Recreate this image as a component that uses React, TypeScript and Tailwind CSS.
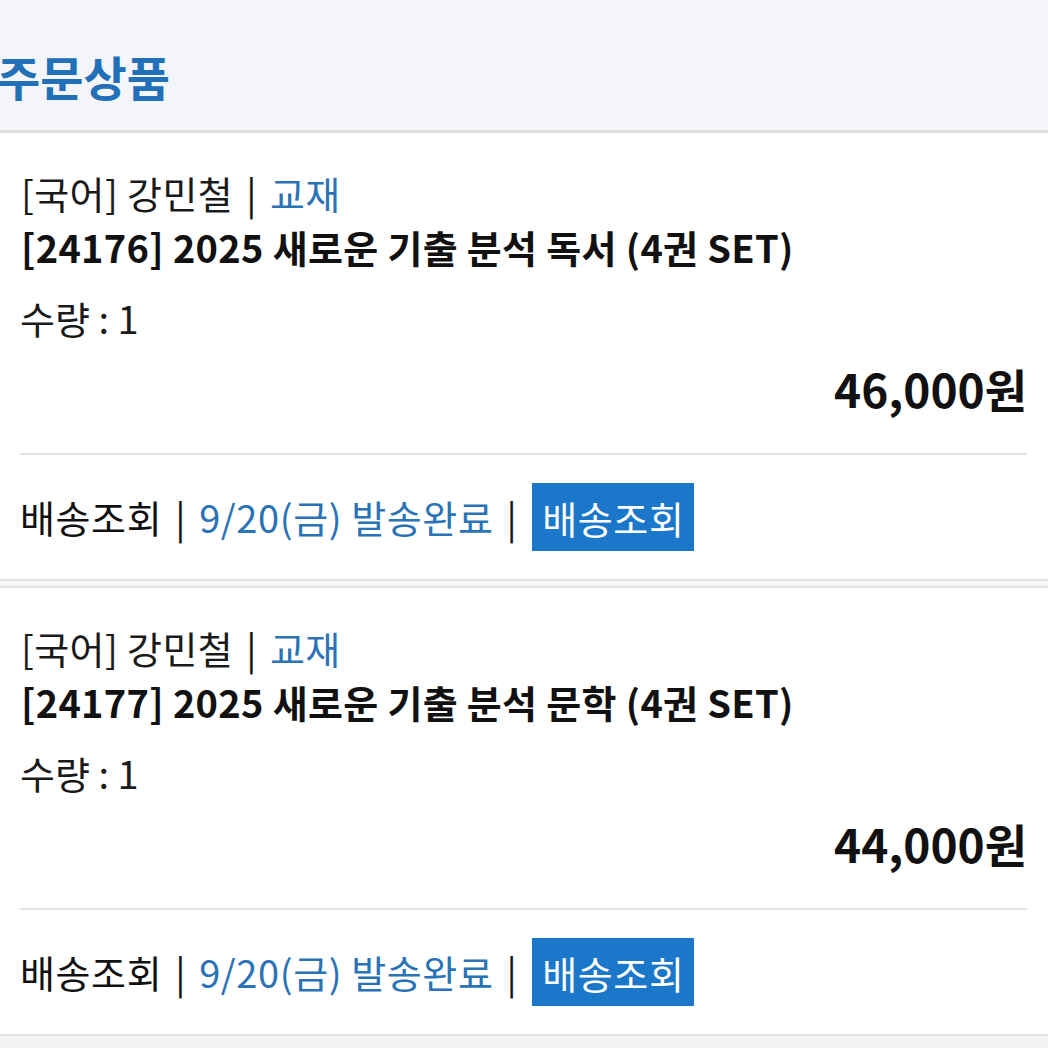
const font = { fontFamily: '"Noto Sans CJK KR", "Noto Sans", sans-serif' };

type Item = { code: string; title: string; qty: number; price: string };

const items: Item[] = [
  { code: "24176", title: "2025 새로운 기출 분석 독서 (4권 SET)", qty: 1, price: "46,000" },
  { code: "24177", title: "2025 새로운 기출 분석 문학 (4권 SET)", qty: 1, price: "44,000" },
];

function Bar() {
  return <span className="mx-[13px] text-[#111]">|</span>;
}

function OrderItem({ item }: { item: Item }) {
  return (
    <div className="bg-white px-[21px] pt-[33px]">
      <div className="text-[38px] leading-[54px] text-[#1a1a1a] tracking-[0.4px] whitespace-pre">
        [국어] 강민철<Bar /><span className="text-[#2a73b6]">교재</span>
      </div>
      <div className="text-[38px] leading-[54px] font-bold text-[#111] tracking-[0.3px]">
        [{item.code}] {item.title}
      </div>
      <div className="mt-[17px] text-[38px] leading-[54px] text-[#1a1a1a] -ml-[1px] whitespace-pre">
        수량 : {item.qty}
      </div>
      <div className="mt-[16px] text-right text-[46px] leading-[54px] font-bold text-[#111]">
        {item.price}원
      </div>
      <div className="mt-[38px] h-[2px] bg-[#e3e3e5] -ml-[1px]" />
      <div className="flex items-center py-[28px] -ml-[1px]">
        <div className="text-[38px] leading-[68px] text-[#111] tracking-[0.6px] whitespace-pre">
          배송조회<Bar />
          <span className="text-[#2a73b6]">9/20(금) 발송완료</span>
          <Bar />
        </div>
        <div className="ml-[2px] h-[68px] w-[162px] bg-[#1b77c9] flex items-center justify-center text-white text-[38px] tracking-[0.6px]">
          배송조회
        </div>
      </div>
    </div>
  );
}

export default function App() {
  return (
    <div className="w-[1048px] h-[1048px] overflow-hidden bg-[#f3f3f5]" style={font}>
      <div className="h-[133px] bg-[#f4f5f8] border-b-[3px] border-[#dcdde0] flex items-center">
        <h1 className="text-[47px] font-bold text-[#2270b8] -ml-[3px] mt-[20px] leading-none">주문상품</h1>
      </div>
      <OrderItem item={items[0]} />
      <div className="h-[2px] bg-[#e2e2e4]" />
      <div className="h-[5px] bg-[#f6f6f8]" />
      <div className="h-[2px] bg-[#e2e2e4]" />
      <OrderItem item={items[1]} />
      <div className="h-[2px] bg-[#e2e2e4]" />
    </div>
  );
}
